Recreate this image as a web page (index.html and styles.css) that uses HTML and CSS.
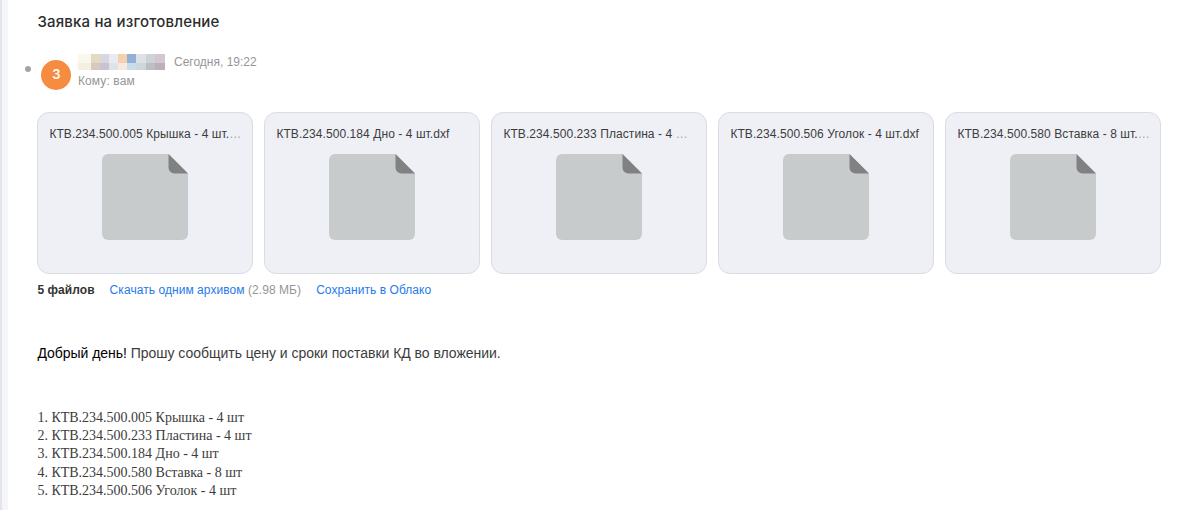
FILE: index.html
```html
<!DOCTYPE html>
<html lang="ru">
<head>
  <meta charset="UTF-8" />
  <meta name="viewport" content="width=device-width, initial-scale=1.0"/>
  <title>Заявка на изготовление</title>
  <link rel="stylesheet" href="styles.css">
</head>
<body>
  <svg class="sprite" aria-hidden="true">
    <symbol id="file" viewBox="0 0 86 86">
      <path fill="#c8cbcc" d="M6 0h60.500L86 19.500V80a6 6 0 0 1-6 6H6a6 6 0 0 1-6-6V6a6 6 0 0 1 6-6z"/>
      <path fill="#808182" d="M66.500 0L86 19.500H72.500a6 6 0 0 1-6-6z"/>
    </symbol>
  </svg>

  <main class="letter">
    <h1>Заявка на изготовление</h1>

    <header class="sender">
      <span class="unread"></span>
      <span class="avatar">З</span>
      <div class="sender-info">
        <div class="sender-top">
          <svg class="sender-name" viewBox="0 0 87 16" shape-rendering="crispEdges">
            <path fill="#faf7ed" d="M0 0h13v9H0z"/>
            <path fill="#e3dac1" d="M13 0h9v9h-9z"/>
            <path fill="#d8d7df" d="M22 0h9v9h-9z"/>
            <path fill="#e9ebf1" d="M31 0h9v9h-9z"/>
            <path fill="#f3d0ae" d="M40 0h9v9h-9z"/>
            <path fill="#92afd6" d="M49 0h9v9h-9z"/>
            <path fill="#dce2e6" d="M58 0h10v9H58z"/>
            <path fill="#cfd3d9" d="M68 0h9v9h-9z"/>
            <path fill="#d3c8cf" d="M77 0h10v9H77z"/>
            <path fill="#faeee2" d="M0 9h4v7H0z"/>
            <path fill="#f4f0e0" d="M4 9h9v7H4z"/>
            <path fill="#d7c9c0" d="M13 9h9v7h-9z"/>
            <path fill="#c6c4ce" d="M22 9h9v7h-9z"/>
            <path fill="#dfe2e9" d="M31 9h9v7h-9z"/>
            <path fill="#f7e9dd" d="M40 9h9v7h-9z"/>
            <path fill="#cadbe9" d="M49 9h9v7h-9z"/>
            <path fill="#cdd6da" d="M58 9h10v7H58z"/>
            <path fill="#babec5" d="M68 9h9v7h-9z"/>
            <path fill="#bcafb9" d="M77 9h10v7H77z"/>
          </svg>
          <span class="date">Сегодня, 19:22</span>
        </div>
        <div class="recipient">Кому: вам</div>
      </div>
    </header>

    <section class="files">
      <div class="file">
        <div class="file-name">КТВ.234.500.005 Крышка - 4 шт.<span class="dots">…</span></div>
        <svg class="file-icon"><use href="#file"/></svg>
      </div>
      <div class="file">
        <div class="file-name">КТВ.234.500.184 Дно - 4 шт.dxf</div>
        <svg class="file-icon"><use href="#file"/></svg>
      </div>
      <div class="file">
        <div class="file-name">КТВ.234.500.233 Пластина - 4 <span class="dots">…</span></div>
        <svg class="file-icon"><use href="#file"/></svg>
      </div>
      <div class="file">
        <div class="file-name">КТВ.234.500.506 Уголок - 4 шт.dxf</div>
        <svg class="file-icon"><use href="#file"/></svg>
      </div>
      <div class="file">
        <div class="file-name">КТВ.234.500.580 Вставка - 8 шт.<span class="dots">…</span></div>
        <svg class="file-icon"><use href="#file"/></svg>
      </div>
    </section>

    <div class="actions">
      <b>5 файлов</b>
      <span class="archive"><a>Скачать одним архивом</a> (2.98 МБ)</span>
      <a>Сохранить в Облако</a>
    </div>

    <p class="message"><span class="greeting">Добрый день!</span> Прошу сообщить цену и сроки поставки КД во вложении.</p>

    <div class="order">
      <div>1. КТВ.234.500.005 Крышка - 4 шт</div>
      <div>2. КТВ.234.500.233 Пластина - 4 шт</div>
      <div>3. КТВ.234.500.184 Дно - 4 шт</div>
      <div>4. КТВ.234.500.580 Вставка - 8 шт</div>
      <div>5. КТВ.234.500.506 Уголок - 4 шт</div>
    </div>
  </main>
</body>
</html>
```
FILE: styles.css
```css
* { box-sizing: border-box; }

body {
  margin: 0;
  height: 510px;
  overflow: hidden;
  font-family: "Liberation Sans", Arial, sans-serif;
  font-size: 12px;
  background: #ffffff;
  color: #3c3c3d;
}

.sprite {
  display: none;
}

.letter {
  height: 510px;
  padding: 12px 0 0 35.4px;
  border-left: 2px solid #e3e4ee;
  box-shadow: inset 6px 0 #f5f6fa;
}

h1 {
  margin: 0;
  font-family: Inter, sans-serif;
  font-size: 15px;
  font-weight: 500;
  line-height: 20px;
  letter-spacing: 0.18px;
  color: #2c2d2e;
}

.sender {
  display: flex;
  align-items: center;
  height: 36px;
  margin: 22px 0 0 -12px;
  color: #959699;
}

.unread {
  width: 6px;
  height: 6px;
  margin: -6px 10px 0 0;
  border-radius: 50%;
  background: #a3a4aa;
}

.avatar {
  width: 30px;
  height: 30px;
  margin: 5px 6.6px 0 0;
  border-radius: 50%;
  background: #f68c40;
  color: #ffffff;
  font: 600 13px/29px Inter, sans-serif;
  text-align: center;
}

.sender-info {
  height: 36px;
}

.sender-top {
  display: flex;
  gap: 9px;
  height: 19px;
  line-height: 16px;
}

.sender-name {
  width: 87px;
  height: 16px;
}

.recipient {
  line-height: 17px;
  letter-spacing: 0.1px;
}

.files {
  display: flex;
  gap: 11px;
  margin-top: 22px;
}

.file {
  display: flex;
  flex-direction: column;
  align-items: center;
  width: 216px;
  height: 162px;
  padding: 13px 11px 0;
  border: 1px solid #dadce3;
  border-radius: 12px;
  background: #eff0f5;
}

.file-name {
  align-self: flex-start;
  line-height: 16px;
  letter-spacing: 0.07px;
  white-space: pre;
}

.dots {
  color: #a5a6aa;
}

.file-icon {
  width: 86px;
  height: 86px;
  margin-top: 11.5px;
}

.actions {
  display: flex;
  gap: 15px;
  margin-top: 8px;
  line-height: 16px;
  letter-spacing: 0.06px;
  color: #959699;
}

.actions b {
  color: #333333;
}

.actions a {
  color: #1f7bea;
}

.message {
  margin: 46px 0 0;
  font-size: 14px;
  line-height: 18px;
  letter-spacing: -0.03px;
}

.greeting {
  color: #000000;
}

.order {
  margin-top: 47px;
  font-family: "Liberation Serif", "Times New Roman", serif;
  font-size: 14px;
  line-height: 18.2px;
}
```
